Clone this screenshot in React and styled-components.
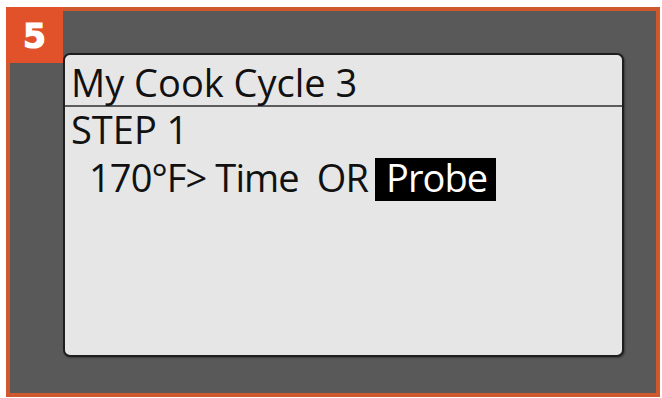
import React from 'react';
import styled, { createGlobalStyle } from 'styled-components';

const GlobalStyle = createGlobalStyle`
  html, body {
    margin: 0;
    padding: 0;
    background: #ffffff;
  }
`;

const Page = styled.div`
  width: 662px;
  height: 398px;
  padding: 7px 2px 1px 6px;
  box-sizing: border-box;
`;

const Frame = styled.div`
  position: relative;
  height: 100%;
  box-sizing: border-box;
  border: 4px solid #d0582e;
  background-color: #595959;
  padding: 42px 32px 36px 53px;
  display: flex;
`;

const Badge = styled.div`
  position: absolute;
  top: -4px;
  left: -4px;
  width: 57px;
  height: 56px;
  background-color: #e2522a;
  color: #fff;
  display: flex;
  align-items: center;
  justify-content: center;
  font-family: 'DejaVu Sans', sans-serif;
  font-weight: 900;
  font-size: 33px;
  -webkit-text-stroke: 1.2px #fff;
  padding-top: 3px;
  box-sizing: border-box;
`;

const Screen = styled.div`
  flex: 1;
  background-color: #e6e6e6;
  border: 2px solid #1e1e1e;
  border-radius: 7px;
  box-shadow: 1px 1px 2px rgba(0, 0, 0, 0.35);
  display: flex;
  flex-direction: column;
  font-family: 'Open Sans', sans-serif;
  font-size: 38px;
  color: #111;
  overflow: hidden;
`;

const Title = styled.div`
  height: 52px;
  box-sizing: border-box;
  padding: 1px 0 0 6px;
  border-bottom: 2px solid #5c5c5c;
  line-height: 52px;
`;

const Line = styled.div`
  line-height: ${(p) => p.$height || 44}px;
  padding-left: ${(p) => p.$indent || 6}px;
  letter-spacing: ${(p) => p.$tight ? '-0.9px' : 'normal'};
  white-space: pre;
`;

const Highlight = styled.span`
  display: inline-block;
  background-color: #000;
  color: #fff;
  line-height: 38px;
  padding: 0 9px 5px 11px;
  margin-left: -2px;
`;

export default function App() {
  return (
    <>
      <GlobalStyle />
      <Page>
        <Frame>
          <Badge>5</Badge>
          <Screen>
            <Title>My Cook Cycle 3</Title>
            <Line>STEP 1</Line>
            <Line $indent={24} $height={52} $tight>
              170°F&gt; Time  OR <Highlight>Probe</Highlight>
            </Line>
          </Screen>
        </Frame>
      </Page>
    </>
  );
}
